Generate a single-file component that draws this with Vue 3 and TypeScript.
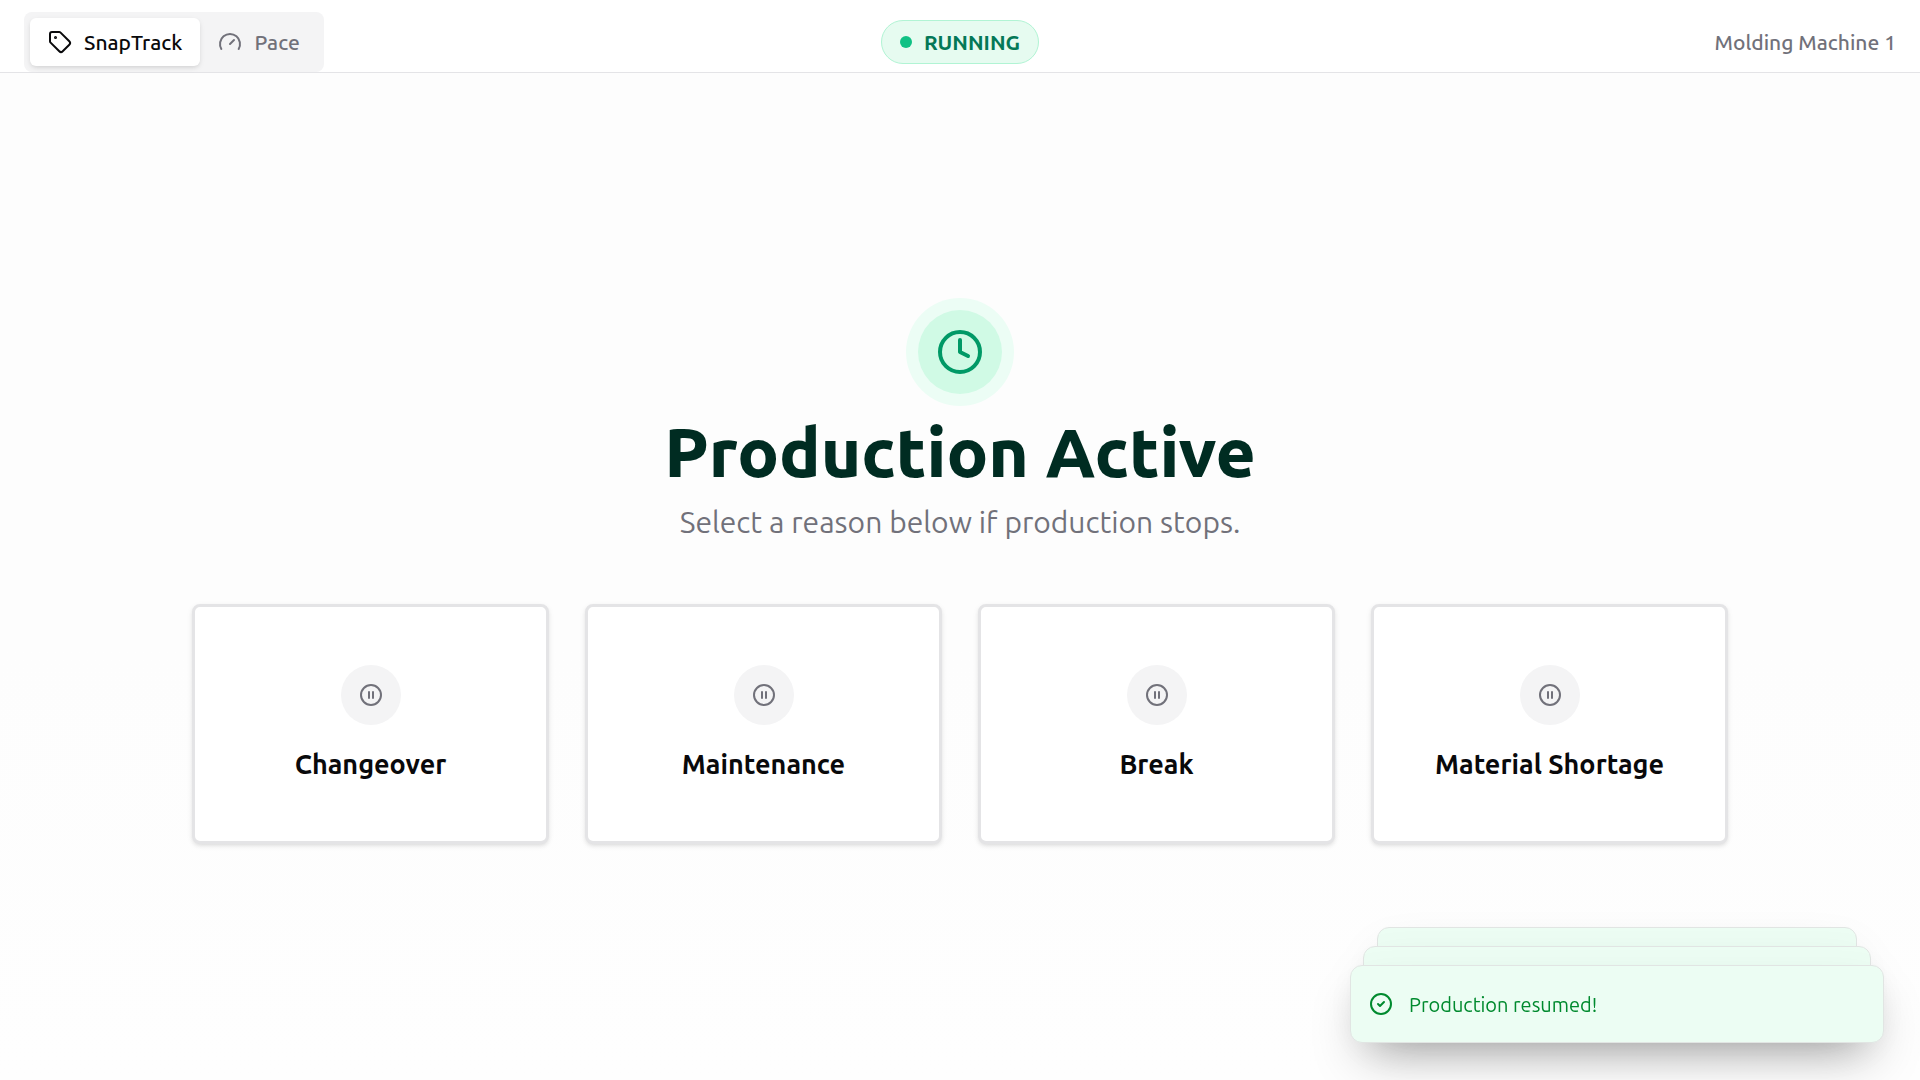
<script setup lang="ts">
import { ref } from 'vue'

type View = 'snaptrack' | 'pace'

const view = ref<View>('snaptrack')
const machine = 'Molding Machine 1'
const reasons: string[] = ['Changeover', 'Maintenance', 'Break', 'Material Shortage']
</script>

<template>
  <div class="page">
    <header class="topbar">
      <nav class="tabs" aria-label="View">
        <button type="button" class="tab" :class="{ active: view === 'snaptrack' }" @click="view = 'snaptrack'">
          <svg class="icon" viewBox="0 0 24 24" aria-hidden="true">
            <path d="M12.586 2.586A2 2 0 0 0 11.172 2H4a2 2 0 0 0-2 2v7.172a2 2 0 0 0 .586 1.414l8.704 8.704a2.426 2.426 0 0 0 3.42 0l6.58-6.58a2.426 2.426 0 0 0 0-3.42z" />
            <circle cx="7.5" cy="7.5" r=".5" fill="currentColor" />
          </svg>
          <span>SnapTrack</span>
        </button>
        <button type="button" class="tab" :class="{ active: view === 'pace' }" @click="view = 'pace'">
          <svg class="icon" viewBox="0 0 24 24" aria-hidden="true">
            <path d="m12 14 4-4" />
            <path d="M3.34 19a10 10 0 1 1 17.32 0" />
          </svg>
          <span>Pace</span>
        </button>
      </nav>
      <div class="status" role="status">
        <span class="dot"></span>
        <span>RUNNING</span>
      </div>
      <div class="machine">{{ machine }}</div>
    </header>

    <main class="main">
      <div class="badge">
        <svg class="icon clock" viewBox="0 0 24 24" aria-hidden="true">
          <circle cx="12" cy="12" r="10" />
          <path d="M12 6v6l4 2" />
        </svg>
      </div>
      <h1 class="title">Production Active</h1>
      <p class="subtitle">Select a reason below if production stops.</p>
      <div class="reasons">
        <button v-for="reason in reasons" :key="reason" type="button" class="reason">
          <span class="reason-icon">
            <svg class="icon" viewBox="0 0 24 24" aria-hidden="true">
              <circle cx="12" cy="12" r="10" />
              <path d="M10 15V9M14 15V9" />
            </svg>
          </span>
          <span>{{ reason }}</span>
        </button>
      </div>
    </main>

    <div class="toaster">
      <div class="toast-back far"></div>
      <div class="toast-back near"></div>
      <div class="toast" role="alert">
        <svg class="icon" viewBox="0 0 24 24" aria-hidden="true">
          <circle cx="12" cy="12" r="10" />
          <path d="m9 12 2 2 4-4" />
        </svg>
        <span>Production resumed!</span>
      </div>
    </div>
  </div>
</template>

<style>
body {
  margin: 0;
}
</style>

<style scoped>
.page {
  display: flex;
  flex-direction: column;
  min-height: 100vh;
  background: linear-gradient(#fdfdfd 60%, #fefefe);
  color: #09090b;
  font-family: Ubuntu, "Noto Sans", sans-serif;
  font-size: 21px;
  font-weight: 500;
  line-height: 29px;
}

button {
  border: 0;
  font: inherit;
  color: inherit;
  cursor: pointer;
}

.icon {
  flex: none;
  width: 24px;
  height: 24px;
  fill: none;
  stroke: currentColor;
  stroke-width: 2;
  stroke-linecap: round;
  stroke-linejoin: round;
}

.topbar {
  display: grid;
  grid-template-columns: 1fr auto 1fr;
  align-items: center;
  padding: 12px 24px 0;
  border-bottom: 1px solid #e4e4e7;
  background: #fff;
}

.tabs {
  display: flex;
  justify-self: start;
  padding: 6px;
  border-radius: 8px;
  background: #f4f4f5;
}

.tab {
  display: flex;
  align-items: center;
  gap: 12px;
  height: 48px;
  padding: 0 18px;
  border-radius: 6px;
  background: transparent;
  color: #71717a;
}

.tab.active {
  background: #fff;
  color: #09090b;
  box-shadow: 0 2px 4px -1px rgba(0, 0, 0, 0.1), 0 2px 6px rgba(0, 0, 0, 0.06);
}

.status {
  display: flex;
  align-items: center;
  gap: 12px;
  box-sizing: border-box;
  height: 44px;
  padding: 0 18px;
  border: 1px solid #b1f4d4;
  border-radius: 22px;
  background: #e6fbf0;
  color: #047857;
  font-weight: 700;
}

.dot {
  width: 12px;
  height: 12px;
  border-radius: 50%;
  background: #10c184;
}

.machine {
  justify-self: end;
  color: #71717a;
}

.main {
  display: flex;
  flex: 1;
  flex-direction: column;
  align-items: center;
  justify-content: center;
  width: 80%;
  margin: 0 auto;
}

.badge {
  display: flex;
  align-items: center;
  justify-content: center;
  width: 84px;
  height: 84px;
  border-radius: 50%;
  background: #d0fae5;
  box-shadow: 0 0 0 12px #ecfdf5;
  color: #009966;
}

.clock {
  width: 48px;
  height: 48px;
}

.title {
  margin: 18px 0 0;
  color: #002c22;
  font-size: 69px;
  font-weight: 800;
  line-height: 80px;
}

.subtitle {
  margin: 12px 0 64px;
  color: #71717a;
  font-size: 30px;
  font-weight: 400;
  line-height: 36px;
}

.reasons {
  display: grid;
  grid-template-columns: repeat(4, 1fr);
  gap: 36px;
  width: 100%;
}

.reason {
  display: flex;
  flex-direction: column;
  align-items: center;
  justify-content: center;
  gap: 20px;
  height: 240px;
  padding: 0 18px;
  border: 3px solid #e4e4e6;
  border-radius: 8px;
  background: #fff;
  box-shadow: 0 2px 4px -1px rgba(0, 0, 0, 0.1), 0 2px 6px rgba(0, 0, 0, 0.06);
  font-size: 27px;
  font-weight: 600;
  line-height: 38px;
}

.reason-icon {
  display: flex;
  align-items: center;
  justify-content: center;
  width: 60px;
  height: 60px;
  border-radius: 50%;
  background: #f4f4f5;
  color: #71717a;
}

.toaster {
  position: fixed;
  right: 36px;
  bottom: 37px;
  width: 534px;
}

.toast,
.toast-back {
  box-sizing: border-box;
  height: 78px;
  border: 1px solid #e1e5e3;
  border-radius: 12px;
  background: #ecfdf3;
  box-shadow: 0 25px 50px -12px rgba(0, 0, 0, 0.25);
}

.toast {
  position: relative;
  display: flex;
  align-items: center;
  gap: 16px;
  padding: 0 18px;
  color: #008a2e;
  font-size: 20px;
  font-weight: 400;
}

.toast-back {
  position: absolute;
  height: 75px;
}

.near {
  inset: -19px 13px auto;
}

.far {
  inset: -38px 27px auto;
}
</style>
